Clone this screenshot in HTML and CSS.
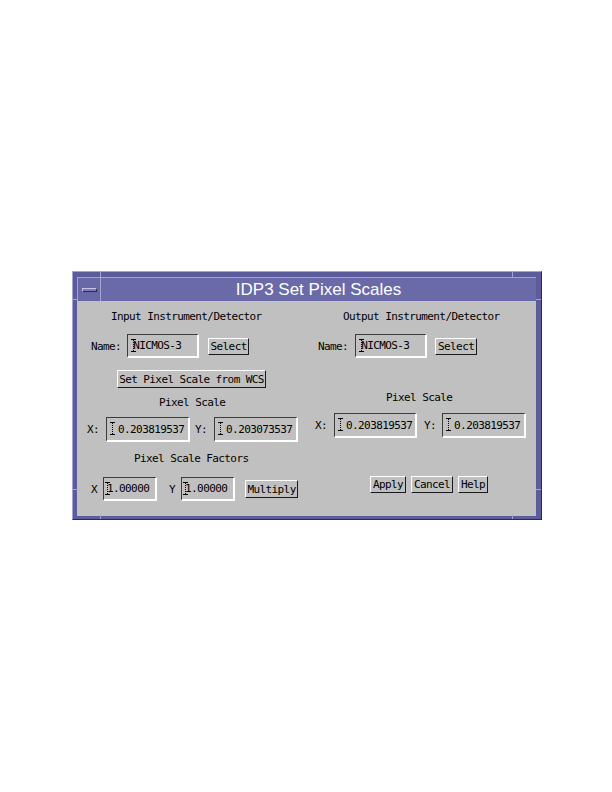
FILE: index.html
```html
<!DOCTYPE html>
<html lang="en">
<head>
    <meta charset="UTF-8">
    <title>IDP3 Set Pixel Scales</title>
    <link rel="stylesheet" href="styles.css">
</head>
<body>
<div class="page">
    <div class="window">
        <!-- resize handle marks on the frame -->
        <span class="tick tick-v tick-tl"></span>
        <span class="tick tick-v tick-tr"></span>
        <span class="tick tick-v tick-bl"></span>
        <span class="tick tick-v tick-br"></span>
        <span class="tick tick-h tick-lt"></span>
        <span class="tick tick-h tick-rt"></span>
        <span class="tick tick-h tick-lb"></span>
        <span class="tick tick-h tick-rb"></span>

        <div class="titlebar">
            <div class="menu-btn"><span class="menu-bar"></span></div>
            <div class="title">IDP3 Set Pixel Scales</div>
        </div>

        <div class="content">
            <div class="col col-left">
                <div class="label in-label">Input Instrument/Detector</div>
                <div class="row name-row">
                    <span class="txt">Name:</span>
                    <div class="field name-field"><span class="ibeam"></span>NICMOS-3</div>
                    <button class="button select-btn">Select</button>
                </div>
                <button class="button wcs-btn">Set Pixel Scale from WCS</button>
                <div class="label ps-label">Pixel Scale</div>
                <div class="row xy-row">
                    <span class="txt">X:</span>
                    <div class="field num-field"><span class="ibeam"></span>0.203819537</div>
                    <span class="txt y-txt">Y:</span>
                    <div class="field num-field"><span class="ibeam"></span>0.203073537</div>
                </div>
                <div class="label psf-label">Pixel Scale Factors</div>
                <div class="row factor-row">
                    <span class="txt">X</span>
                    <div class="field factor-field"><span class="ibeam"></span>1.00000</div>
                    <span class="txt fy-txt">Y</span>
                    <div class="field factor-field"><span class="ibeam"></span>1.00000</div>
                    <button class="button multiply-btn">Multiply</button>
                </div>
            </div>

            <div class="col col-right">
                <div class="label out-label">Output Instrument/Detector</div>
                <div class="row name-row name-row-r">
                    <span class="txt">Name:</span>
                    <div class="field name-field"><span class="ibeam"></span>NICMOS-3</div>
                    <button class="button select-btn select-r">Select</button>
                </div>
                <div class="label ps-label-r">Pixel Scale</div>
                <div class="row xy-row xy-row-r">
                    <span class="txt">X:</span>
                    <div class="field num-field num-r"><span class="ibeam"></span>0.203819537</div>
                    <span class="txt y-txt-r">Y:</span>
                    <div class="field num-field"><span class="ibeam"></span>0.203819537</div>
                </div>
                <div class="row action-row">
                    <button class="button apply-btn">Apply</button>
                    <button class="button cancel-btn">Cancel</button>
                    <button class="button help-btn">Help</button>
                </div>
            </div>
        </div>
    </div>
</div>
</body>
</html>
```

FILE: styles.css
```css
body {
    margin: 0;
    background: #ffffff;
}
.page {
    padding: 271px 0 0 72px;
}

/* window frame */
.window {
    position: relative;
    box-sizing: border-box;
    width: 470px;
    height: 249px;
    background: #5c5c9c;
    border-top: 1px solid #a4a4d4;
    border-left: 1px solid #a4a4d4;
    border-right: 1px solid #2a2a55;
    border-bottom: 1px solid #2a2a55;
    padding: 5px 5px 3px 4px;
    display: flex;
    flex-direction: column;
}
.tick {
    position: absolute;
    background: #a4a4d4;
}
.tick-v { width: 1px; height: 6px; }
.tick-h { width: 5px; height: 1px; }
.tick-tl { left: 27px; top: 0; }
.tick-tr { right: 28px; top: 0; }
.tick-bl { left: 27px; bottom: 0; height: 4px; }
.tick-br { right: 28px; bottom: 0; height: 4px; }
.tick-lt { left: 0; top: 27px; }
.tick-rt { right: 0; top: 27px; }
.tick-lb { left: 0; bottom: 29px; }
.tick-rb { right: 0; bottom: 29px; }

.titlebar {
    height: 24px;
    display: flex;
    border-top: 1px solid #a4a4d4;
    border-left: 1px solid #a4a4d4;
    box-sizing: border-box;
}
.menu-btn {
    width: 23px;
    box-sizing: border-box;
    border-right: 1px solid #a4a4d4;
    background: #6868a6;
    display: flex;
    align-items: center;
    justify-content: center;
}
.menu-bar {
    width: 15px;
    height: 4px;
    box-sizing: border-box;
    background: #7a7ab8;
    border-top: 1px solid #c4c4e8;
    border-left: 1px solid #c4c4e8;
    border-right: 1px solid #2a2a55;
    border-bottom: 1px solid #2a2a55;
}
.title {
    flex: 1;
    background: #6a6aa8;
    color: #ffffff;
    font-family: "Liberation Sans", Arial, sans-serif;
    font-size: 17px;
    line-height: 23px;
    text-align: center;
}

/* dialog body */
.content {
    flex: 1;
    background: #c0c0c0;
    display: flex;
    font-family: "DejaVu Sans Mono", "Liberation Mono", monospace;
    font-size: 11px;
    letter-spacing: -0.6px;
    color: #000000;
}
.col {
    display: flex;
    flex-direction: column;
    align-items: flex-start;
}
.col-left { width: 228px; }
.col-right { width: 231px; }

.label {
    height: 13px;
    line-height: 13px;
    white-space: nowrap;
}
.in-label { margin: 9px 0 0 34px; }
.ps-label { margin: 8px 0 0 82px; }
.psf-label { margin: 10px 0 0 57px; }
.out-label { margin: 9px 0 0 38px; }
.ps-label-r { margin: 33px 0 0 81px; }

.row {
    display: flex;
    align-items: center;
}
.txt {
    white-space: nowrap;
    line-height: 13px;
}

.field {
    position: relative;
    box-sizing: border-box;
    display: flex;
    align-items: center;
    border-top: 1px solid #3c3c3c;
    border-left: 1px solid #3c3c3c;
    border-right: 2px solid #ffffff;
    border-bottom: 2px solid #ffffff;
    white-space: nowrap;
}
.ibeam {
    position: absolute;
    top: 50%;
    width: 5px;
    height: 13px;
    margin-top: -7px;
    border-top: 1px solid #000;
    border-bottom: 1px solid #000;
    box-sizing: border-box;
    background: repeating-linear-gradient(#000 0 1px, transparent 1px 2px) center / 1px 100% no-repeat;
}

.button {
    box-sizing: border-box;
    font: inherit;
    letter-spacing: inherit;
    color: #000;
    background: #c0c0c0;
    border-top: 1px solid #ffffff;
    border-left: 1px solid #ffffff;
    border-right: 1px solid #1a1a1a;
    border-bottom: 1px solid #1a1a1a;
    padding: 0;
    line-height: 13px;
    text-align: center;
    white-space: nowrap;
    cursor: pointer;
}

/* left column */
.name-row { margin: 11px 0 0 14px; height: 24px; }
.name-field { width: 72px; height: 24px; margin-left: 6px; padding-left: 5px; }
.name-field .ibeam { left: 3px; }
.select-btn { width: 41px; height: 17px; margin-left: 9px; }
.wcs-btn { width: 149px; height: 18px; margin: 12px 0 0 40px; }

.xy-row { margin: 8px 0 0 10px; height: 25px; }
.num-field { width: 84px; height: 25px; margin-left: 7px; padding-left: 11px; }
.num-field .ibeam { left: 3px; }
.y-txt { margin-left: 5px; }

.factor-row { margin: 12px 0 0 14px; height: 24px; }
.factor-field { width: 54px; height: 24px; margin-left: 6px; padding-left: 3px; }
.factor-field .ibeam { left: 1px; }
.fy-txt { margin-left: 12px; }
.multiply-btn { width: 53px; height: 18px; margin-left: 10px; }

/* right column */
.name-row-r { margin-left: 13px; }
.name-row-r .name-field { margin-left: 7px; }
.select-r { width: 42px; margin-left: 8px; }
.xy-row-r { margin: 9px 0 0 10px; }
.num-r { width: 83px; }
.y-txt-r { margin-left: 7px; }
.y-txt-r + .num-field { margin-left: 6px; }

.action-row { margin: 38px 0 0 65px; height: 17px; }
.apply-btn { width: 36px; height: 17px; }
.cancel-btn { width: 42px; height: 17px; margin-left: 5px; }
.help-btn { width: 30px; height: 17px; margin-left: 5px; }
```
